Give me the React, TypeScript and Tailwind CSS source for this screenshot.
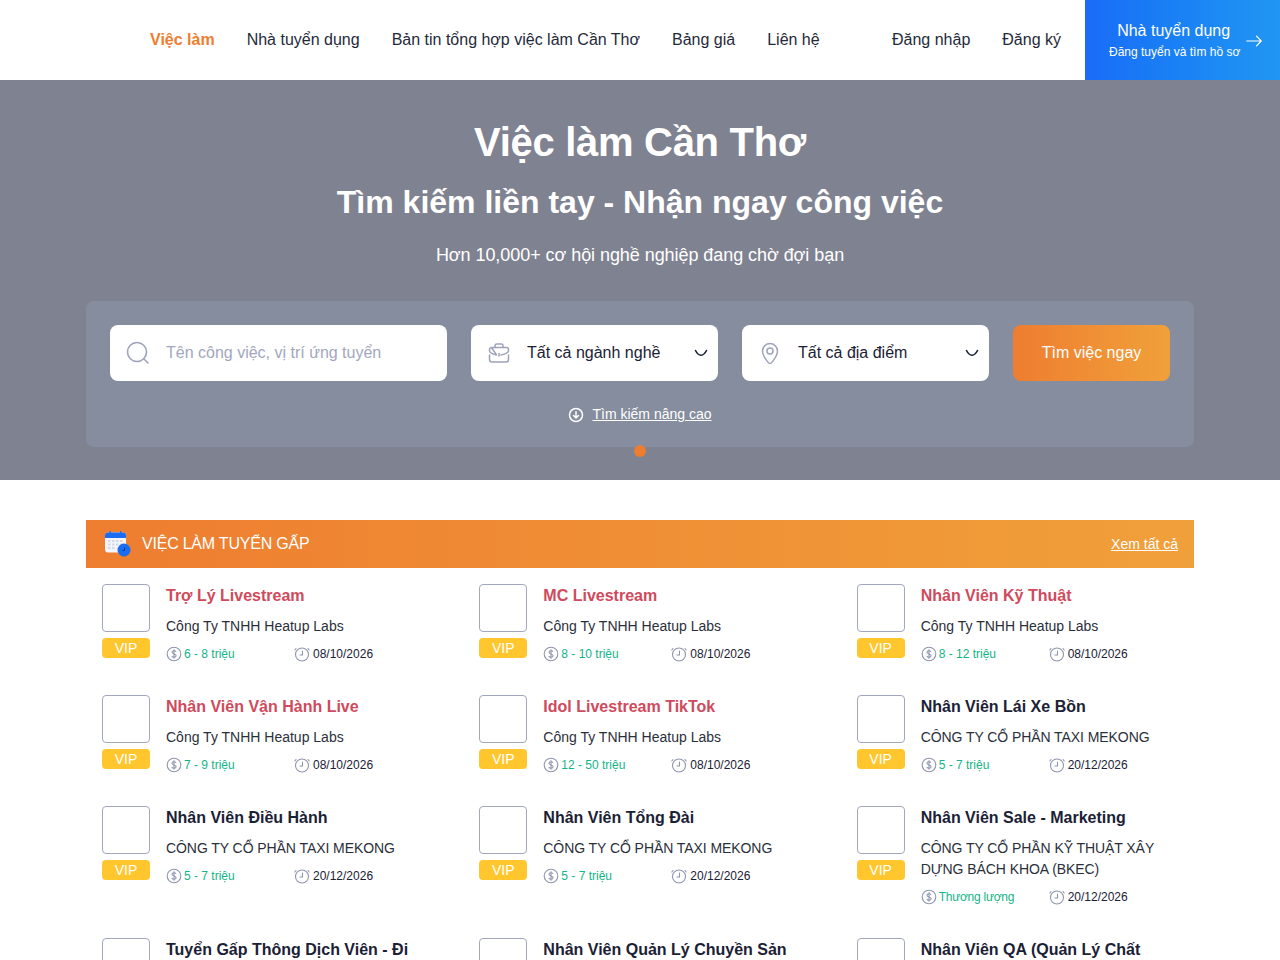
import React from 'react';

interface Job {
  title: string;
  company: string;
  salary: string;
  date: string;
  hot?: boolean;
}

const heatup = 'Công Ty TNHH Heatup Labs';
const taxi = 'CÔNG TY CỔ PHẦN TAXI MEKONG';

const jobs: Job[] = [
  { title: 'Trợ Lý Livestream', company: heatup, salary: '6 - 8 triệu', date: '08/10/2026', hot: true },
  { title: 'MC Livestream', company: heatup, salary: '8 - 10 triệu', date: '08/10/2026', hot: true },
  { title: 'Nhân Viên Kỹ Thuật', company: heatup, salary: '8 - 12 triệu', date: '08/10/2026', hot: true },
  { title: 'Nhân Viên Vận Hành Live', company: heatup, salary: '7 - 9 triệu', date: '08/10/2026', hot: true },
  { title: 'Idol Livestream TikTok', company: heatup, salary: '12 - 50 triệu', date: '08/10/2026', hot: true },
  { title: 'Nhân Viên Lái Xe Bồn', company: taxi, salary: '5 - 7 triệu', date: '20/12/2026' },
  { title: 'Nhân Viên Điều Hành', company: taxi, salary: '5 - 7 triệu', date: '20/12/2026' },
  { title: 'Nhân Viên Tổng Đài', company: taxi, salary: '5 - 7 triệu', date: '20/12/2026' },
  { title: 'Nhân Viên Sale - Marketing', company: 'CÔNG TY CỔ PHẦN KỸ THUẬT XÂY DỰNG BÁCH KHOA (BKEC)', salary: 'Thương lượng', date: '20/12/2026' },
  { title: 'Tuyển Gấp Thông Dịch Viên - Đi Làm Ngay', company: heatup, salary: '8 - 12 triệu', date: '20/12/2026' },
  { title: 'Nhân Viên Quản Lý Chuyền Sản Xuất', company: heatup, salary: '8 - 12 triệu', date: '20/12/2026' },
  { title: 'Nhân Viên QA (Quản Lý Chất Lượng)', company: heatup, salary: '8 - 12 triệu', date: '20/12/2026' },
];

const SearchIcon = () => (
  <svg width="24" height="24" viewBox="0 0 24 24" fill="none" stroke="#9ea3ba" strokeWidth="1.6" strokeLinecap="round">
    <circle cx="11" cy="11" r="9.5" />
    <path d="M18 18l4 4" />
  </svg>
);

const BriefcaseIcon = () => (
  <svg width="24" height="24" viewBox="0 0 24 24" fill="none" stroke="#9ea3ba" strokeWidth="1.5" strokeLinecap="round" strokeLinejoin="round">
    <path d="M8 6.500V4.800C8 3.800 8.800 3 9.800 3h4.400c1 0 1.800.8 1.800 1.800v1.700" />
    <path d="M4.500 6.500h15c1.100 0 2 .9 2 2v1.500c0 1.500-4 3.500-7.500 4M9.500 14C6 13.500 2.500 11.500 2.500 10V8.500c0-1.100.9-2 2-2z" />
    <path d="M2.500 14v4.500c0 1.400 1.100 2.500 2.500 2.500h14c1.400 0 2.500-1.100 2.500-2.500V14" />
    <path d="M12 12.500v2.500" />
  </svg>
);

const PinIcon = () => (
  <svg width="24" height="24" viewBox="0 0 24 24" fill="none" stroke="#9ea3ba" strokeWidth="1.5" strokeLinejoin="round">
    <path d="M12 22.500c-1 0-7.500-7-7.500-12.500a7.500 7.500 0 0 1 15 0c0 5.500-6.500 12.500-7.500 12.500z" />
    <circle cx="12" cy="10" r="3" />
  </svg>
);

const Chevron = () => (
  <svg width="14" height="8" viewBox="0 0 14 8" fill="none" stroke="#1b2135" strokeWidth="1.600" strokeLinecap="round" strokeLinejoin="round">
    <path d="M1.500 1.500C3 4.500 5 6.200 7 6.200s4-1.700 5.500-4.700" />
  </svg>
);

const DollarIcon = () => (
  <svg width="16" height="16" viewBox="0 0 16 16" fill="none" stroke="#8f95ae" strokeWidth="1.100">
    <circle cx="8" cy="8" r="6.800" />
    <path d="M10 5.800C9.600 5 8.900 4.700 8 4.700c-1.200 0-2 .6-2 1.600 0 2.200 4.100 1.200 4.100 3.400 0 1-.9 1.600-2.100 1.600-1 0-1.800-.4-2.200-1.200M8 3.300v9.400" />
  </svg>
);

const ClockIcon = () => (
  <svg width="16" height="16" viewBox="0 0 16 16" fill="none" stroke="#8f95ae" strokeWidth="1.100" strokeLinecap="round">
    <circle cx="8" cy="8.500" r="6.500" />
    <path d="M8.500 5v4H6M2 2.500L.8 4M14 2.500L15.200 4" />
  </svg>
);

const CalendarIcon = () => (
  <svg width="26" height="26" viewBox="0 0 26 26">
    <rect x="0" y="1.500" width="21" height="20" rx="3" fill="#f4f5fb" />
    <path d="M0 7V4.500a3 3 0 0 1 3-3h15a3 3 0 0 1 3 3V7z" fill="#1a6cf0" />
    <rect x="4.500" y="0" width="1.500" height="3" rx=".7" fill="#1a6cf0" />
    <rect x="15" y="0" width="1.500" height="3" rx=".7" fill="#1a6cf0" />
    <g fill="#d5d9e6">
      <rect x="3" y="9" width="2.500" height="2" />
      <rect x="7" y="9" width="2.500" height="2" />
      <rect x="11" y="9" width="2.500" height="2" />
      <rect x="15" y="9" width="2.500" height="2" />
      <rect x="3" y="12.500" width="2.500" height="2" />
      <rect x="7" y="12.500" width="2.500" height="2" />
      <rect x="11" y="12.500" width="2.500" height="2" />
      <rect x="15" y="12.500" width="2.500" height="2" />
      <rect x="3" y="16" width="2.500" height="2" />
      <rect x="7" y="16" width="2.500" height="2" />
    </g>
    <circle cx="19" cy="19" r="6.500" fill="#1a6cf0" />
    <path d="M19.500 16.500v3h-2" fill="none" stroke="#0e3c8c" strokeWidth="1" />
  </svg>
);

const JobItem: React.FC<{ job: Job }> = ({ job }) => (
  <div className="flex gap-4 w-[321px] pb-8">
    <div className="w-12 shrink-0">
      <div className="h-12 bg-white border border-[#a2a7bd] rounded" />
      <div className="mt-1.5 h-5 bg-[#ffc62e] rounded-sm text-white text-sm leading-5 text-center">VIP</div>
    </div>
    <div className="flex-1 min-w-0">
      <h3 className={`text-base leading-6 font-bold ${job.hot ? 'text-[#cf4a5c]' : 'text-[#1b2135]'}`}>{job.title}</h3>
      <p className={`mt-2 text-sm leading-[21px] text-[#2b2f3a] ${job.company === heatup ? '' : 'tracking-[-0.07px]'}`}>{job.company}</p>
      <div className="mt-2 flex text-xs leading-[18px]">
        <div className="w-[129px] flex items-center gap-[2px] text-[#12b488]">
          <DollarIcon />
          <span className={job.salary === 'Thương lượng' ? 'tracking-[-0.25px]' : ''}>{job.salary}</span>
        </div>
        <div className="-ml-px flex items-center gap-[3px] text-[#1b2135]">
          <ClockIcon />
          <span>{job.date}</span>
        </div>
      </div>
    </div>
  </div>
);

const navLink = 'text-base text-[#1f2a3a]';

export default function App() {
  return (
    <div className="h-[960px] overflow-hidden bg-white font-['Liberation_Sans',Arial,sans-serif]">
      <header className="h-20 flex items-center bg-white">
        <nav className="flex items-center gap-8 pl-[150px] flex-1">
          <a className="text-base font-bold text-[#ee7d30]">Việc làm</a>
          <a className={navLink}>Nhà tuyển dụng</a>
          <a className={navLink}>Bản tin tổng hợp việc làm Cần Thơ</a>
          <a className={navLink}>Bảng giá</a>
          <a className={navLink}>Liên hệ</a>
        </nav>
        <div className="flex items-center gap-8 pr-6">
          <a className={navLink}>Đăng nhập</a>
          <a className={navLink}>Đăng ký</a>
        </div>
        <a className="w-[195px] h-20 flex items-center pl-6 bg-gradient-to-r from-[#1a6cf6] to-[#2196f3] text-white">
          <div className="text-center">
            <div className="pr-[2px] text-base leading-6">Nhà tuyển dụng</div>
            <div className="text-xs leading-[18px]">Đăng tuyển và tìm hồ sơ</div>
          </div>
          <svg className="ml-1.5 mt-[2px]" width="16" height="12" viewBox="0 0 16 12" fill="none" stroke="#ffffff" strokeWidth="1.200" strokeLinecap="round" strokeLinejoin="round">
            <path d="M.8 6h14.400M10.500 1.200L15.200 6l-4.700 4.800" />
          </svg>
        </a>
      </header>

      <section className="relative h-[400px] bg-[#7f8290] pt-8 text-white text-center">
        <h1 className="text-[40px] leading-[60px] font-bold tracking-[-0.3px]">Việc làm Cần Thơ</h1>
        <h2 className="mt-1.5 text-[32px] leading-[48px] font-bold">Tìm kiếm liền tay - Nhận ngay công việc</h2>
        <p className="mt-4 text-lg leading-[27px] tracking-[-0.06px]">Hơn 10,000+ cơ hội nghề nghiệp đang chờ đợi bạn</p>

        <div className="mt-8 mx-[86px] h-[146px] p-6 bg-[#858d9e] rounded-lg">
          <div className="flex gap-6 text-left">
            <div className="w-[337px] h-14 flex items-center gap-4 px-4 bg-white rounded-lg">
              <SearchIcon />
              <span className="text-base text-[#a2a7bd]">Tên công việc, vị trí ứng tuyển</span>
            </div>
            <div className="w-[247px] h-14 flex items-center gap-4 pl-4 pr-[10px] bg-white rounded-lg">
              <BriefcaseIcon />
              <span className="flex-1 text-base text-[#1b2135]">Tất cả ngành nghề</span>
              <Chevron />
            </div>
            <div className="w-[247px] h-14 flex items-center gap-4 pl-4 pr-[10px] bg-white rounded-lg">
              <PinIcon />
              <span className="flex-1 text-base text-[#1b2135]">Tất cả địa điểm</span>
              <Chevron />
            </div>
            <button className="w-[157px] h-14 rounded-lg bg-gradient-to-r from-[#ee7d30] to-[#f0a03a] text-base text-white">Tìm việc ngay</button>
          </div>
          <div className="mt-[23px] flex items-center justify-center gap-2 text-sm leading-[21px]">
            <svg width="16" height="16" viewBox="0 0 16 16" fill="none" stroke="#ffffff" strokeWidth="1.500" strokeLinecap="round" strokeLinejoin="round">
              <circle cx="8" cy="8" r="6.500" />
              <path d="M8 4.800v6M5.500 8.500L8 11l2.500-2.500" />
            </svg>
            <a className="underline">Tìm kiếm nâng cao</a>
          </div>
        </div>

        <span className="absolute left-[634px] top-[365px] w-3 h-3 rounded-full bg-[#ee7d30]" />
      </section>

      <section className="mt-10 mx-[86px]">
        <div className="h-12 flex items-center pl-[19px] pr-4 bg-gradient-to-r from-[#ee7d30] to-[#f0a03a] text-white">
          <CalendarIcon />
          <span className="ml-[11px] flex-1 text-base tracking-[-0.22px]">VIỆC LÀM TUYỂN GẤP</span>
          <a className="text-sm underline">Xem tất cả</a>
        </div>
        <div className="grid grid-cols-[repeat(3,377.33px)] pl-4 pt-4">
          {jobs.map((job) => (
            <JobItem key={job.title} job={job} />
          ))}
        </div>
      </section>
    </div>
  );
}
